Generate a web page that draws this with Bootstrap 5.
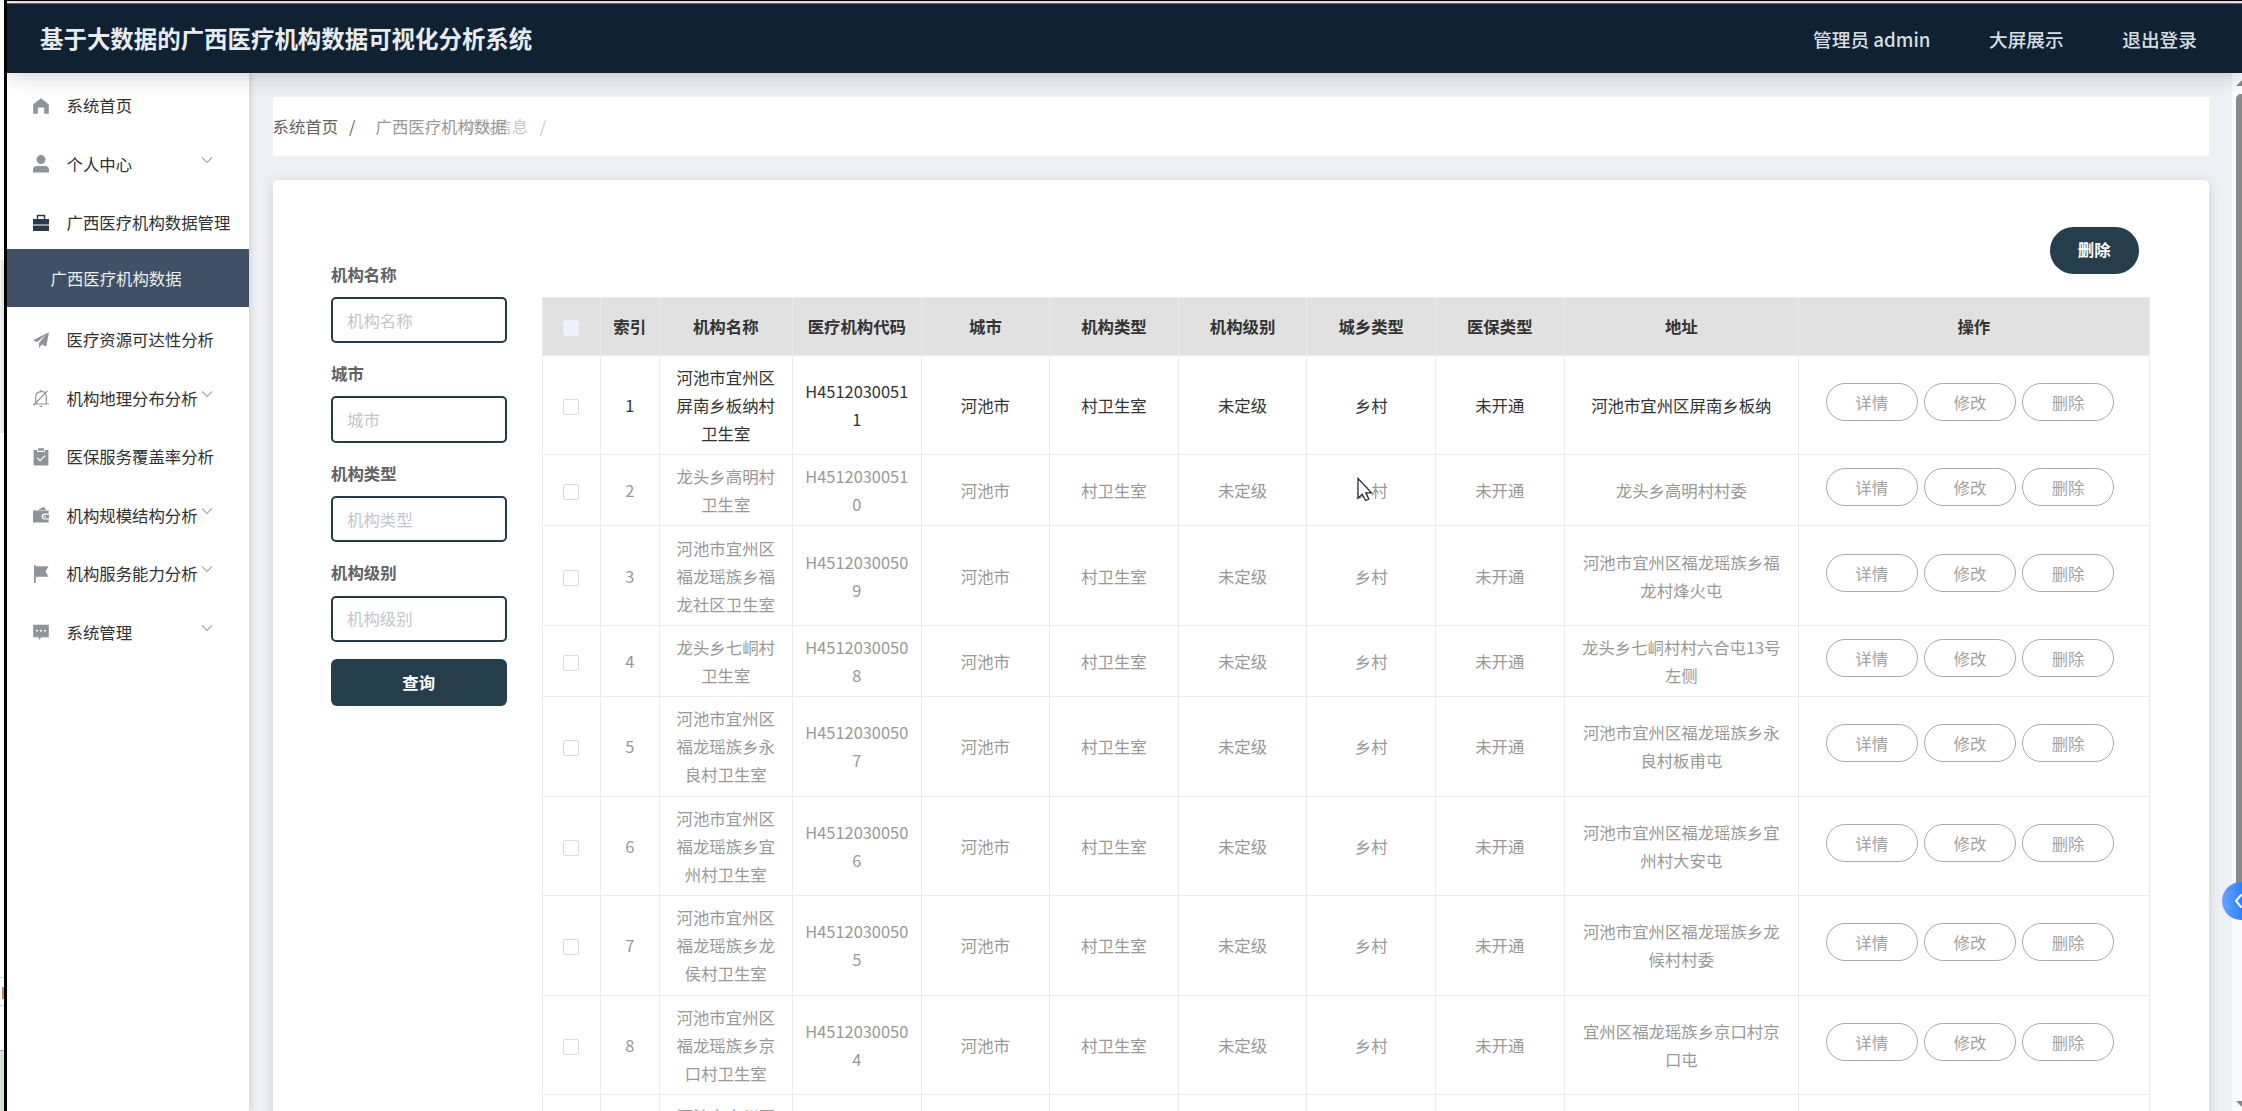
<!DOCTYPE html>
<html lang="zh-CN">

<head>
  <meta charset="UTF-8">
  <meta name="viewport" content="width=device-width, initial-scale=1.0">
  <title>基于大数据的广西医疗机构数据可视化分析系统</title>
  <link href="https://cdn.jsdelivr.net/npm/bootstrap@5.3.2/dist/css/bootstrap.min.css" rel="stylesheet">
  <script src="https://cdn.jsdelivr.net/npm/bootstrap@5.3.2/dist/js/bootstrap.bundle.min.js"></script>
  <style>
    body {
      font-family: "Noto Sans CJK SC", "Noto Sans", sans-serif;
      font-size: 16.4px;
      line-height: 28px;
      color: #303133;
      height: 100vh;
      overflow: hidden;
      background: #fff;
    }

    /* 左侧露出的窗口边缘 */
    .win-edge { width: 7px; border-right: 3px solid #000; padding-top: 260px; }
    .edge-shade { height: 173px; background: linear-gradient(90deg, #f4f4f6, #dfe0e4); }
    .edge-gap { height: 544px; }
    .edge-line { height: 29px; border-top: 1px solid #d4d4d8; border-bottom: 1px solid #d4d4d8; padding: 9px 0 0 2px; }
    .edge-mark { width: 2px; height: 12px; background: #c08a66; }
    .edge-rest { height: 45px; border-bottom: 1px solid #a9aeac; }
    .edge-green { height: 60px; background: #d5e3d5; }

    .win-top { height: 4px; background: #f1eef6; border-top: 1px solid #000; border-bottom: 1px solid #6c6580; }

    .topbar {
      height: 69px;
      background: #0f2133;
      padding: 0 45px 0 33px;
      color: #e6ebef;
      box-shadow: 0 2px 20px rgba(0, 0, 0, .2);
      z-index: 3;
    }
    .topbar .title { font-size: 23.45px; font-weight: 700; padding-bottom: 1px; }
    .topbar .links { gap: 58.5px; font-size: 18.7px; font-weight: 500; padding-top: 1px; color: #d7dee2; }

    .side { width: 242px; background: #fff; box-shadow: 1px 0 7px rgba(0, 0, 0, .16); z-index: 2; }
    .side-item { height: 58.5px; padding: 6px 0 0 26px; white-space: nowrap; }
    .side-item svg { width: 16px; height: 18px; fill: #909399; flex: none; margin: 1px 17.5px 0 0; }
    .side-item svg.chev { width: 12px; height: 8px; fill: none; stroke: #a6a9ae; stroke-width: 1.1; margin: -8px 36.5px 0 auto; }
    .side-sub { height: 58.5px; padding: 1px 0 0 43.5px; background: #405165; color: #e9edf1; }

    .main-area { background: #eef0f5; padding: 23.5px 23px 0 23.5px; overflow: hidden; }
    .crumbs { height: 59.5px; background: #fff; color: #606266; }
    .crumbs .ghost { position: absolute; left: 87px; top: 0; opacity: .55; white-space: nowrap; }
    .panel { margin-top: 23.5px; height: 1000px; background: #fff; border-radius: 5px; box-shadow: 0 2px 14px rgba(0, 0, 0, .12); padding: 47px 59px 0 58.5px; }

    .btn-dark-teal, .btn-dark-teal:hover { background: #263e4b; color: #fff; font-weight: 700; font-size: 16.4px; border: 0; height: 47px; padding: 0 0 1px; }
    .btn-remove { width: 89.5px; border-radius: 23.5px; margin-right: 11px; }

    .filters { width: 175.5px; margin-right: 35px; margin-top: -37.5px; }
    .filters label { font-weight: 700; color: #606266; display: block; height: 37.3px; }
    .filters .form-control {
      height: 46.5px;
      border: 2px solid #263a49;
      border-radius: 5px;
      font-size: 16.4px;
      padding: 0 14px 1px;
      margin-bottom: 15.8px;
    }
    .filters .form-control::placeholder { color: #c3c6cd; }
    .filters .btn { margin-top: 1.5px; }

    .grid { width: 1608px; table-layout: fixed; border-collapse: collapse; text-align: center; flex: none; }
    .grid th, .grid td { border: 1px solid #ebebeb; padding: 0 11.7px; vertical-align: middle; word-break: break-all; }
    .grid th { background: #e1e1e1; height: 57.8px; padding: 0; color: #333; }
    .grid td { color: #999; height: 71.2px; }
    .grid tr.tall td { height: 99.5px; }
    .grid tr.hot td { color: #333; }
    .tick { display: block; width: 16px; height: 16px; margin: 4px auto 0; border: 1px solid #d9dbdf; border-radius: 2px; background: #fff; }
    th .tick { background: #edf0ff; border-color: #edf0ff; margin-top: 3px; }
    .grid td .d-flex { gap: 6.2px; margin-top: -6px; padding-left: 15px; }
    .btn-pill { width: 92px; height: 38px; border: 1px solid #aaa; border-radius: 19px; color: #a3a3a3; font-size: 16.4px; padding: 0; line-height: 36px; }

    .scroller { width: 10px; background: #fafafc; padding: 7px 0 4px 4px; overflow: hidden; }
    .scroller .thumb { height: 812px; width: 10px; margin-top: 8px; background: #8a8a8a; border-radius: 5px 0 0 0; }
    .arrow { width: 12px; height: 6px; }
    .arrow-up { background: #858585; clip-path: polygon(50% 0, 100% 100%, 0 100%); }
    .arrow-down { background: #858585; clip-path: polygon(0 0, 100% 0, 50% 100%); }
    .drawer-tab { position: absolute; right: 0; top: 882px; width: 20px; height: 38px; border-radius: 19px 0 0 19px; background: linear-gradient(90deg, #6aa5fd, #3080fb); z-index: 4; }
    .cursor { position: absolute; left: 1357px; top: 477px; width: 17px; height: 25px; z-index: 4; }
  </style>
</head>

<body>
  <div class="d-flex h-100 position-relative">
    <div class="win-edge flex-shrink-0">
      <div class="edge-shade"></div>
      <div class="edge-gap"></div>
      <div class="edge-line"><div class="edge-mark"></div></div>
      <div class="edge-rest"></div>
      <div class="edge-green"></div>
    </div>

    <div class="d-flex flex-column flex-grow-1 overflow-hidden">
      <div class="win-top flex-shrink-0"></div>
      <header class="topbar d-flex align-items-center justify-content-between flex-shrink-0 position-relative">
        <div class="title">基于大数据的广西医疗机构数据可视化分析系统</div>
        <div class="links d-flex">
          <span>管理员 admin</span>
          <span>大屏展示</span>
          <span>退出登录</span>
        </div>
      </header>

      <div class="d-flex flex-grow-1 overflow-hidden">
        <nav class="side flex-shrink-0 position-relative">
          <div class="side-item d-flex align-items-center">
            <svg viewBox="0 0 16 18"><path d="M8 1.2 15.3 7q.5.4.5 1v8.7h-4.6v-5.2q0-1-1-1H5.8q-1 0-1 1v5.2H.2V8q0-.6.5-1z" /></svg>
            <span>系统首页</span>
          </div>
          <div class="side-item d-flex align-items-center">
            <svg viewBox="0 0 16 18"><circle cx="8" cy="4.6" r="4.5" /><path d="M0 17.5v-2.6q0-4 4-4h8q4 0 4 4v2.6z" /></svg>
            <span>个人中心</span>
            <svg class="chev" viewBox="0 0 12 8"><path d="m1 1.5 5 5 5-5" /></svg>
          </div>
          <div class="side-item d-flex align-items-center">
            <svg viewBox="0 0 16 18" style="fill:#263a4c"><path d="M3.8 5V.8h8.4V5H16v5.4H0V5zM5.2 5h5.6V2.3H5.2zM0 11.6h16V17H0z" fill-rule="evenodd" /></svg>
            <span>广西医疗机构数据管理</span>
          </div>
          <div class="side-sub d-flex align-items-center">广西医疗机构数据</div>
          <div class="side-item d-flex align-items-center">
            <svg viewBox="0 0 16 18"><path d="M16 1.2 0 9.2l4.2 1.9L12.6 4 6 12v5l2.9-3.4 4.4 2z" /></svg>
            <span>医疗资源可达性分析</span>
          </div>
          <div class="side-item d-flex align-items-center">
            <svg viewBox="0 0 16 18" style="fill:none;stroke:#909399;stroke-width:1.2"><path d="M2.7 14V7.5Q3 3 8 2.6T13.3 7.5V15M8 2.6V.8M.3 15H16M.5 16.5 14.5 1.6M6.6 17.3h2.8" /></svg>
            <span>机构地理分布分析</span>
            <svg class="chev" viewBox="0 0 12 8"><path d="m1 1.5 5 5 5-5" /></svg>
          </div>
          <div class="side-item d-flex align-items-center">
            <svg viewBox="0 0 16 18"><path d="M.6 2h3.6v2h7.6V2h3.6v15.6H.6zM5 .2h6v2.6H5z" /><path d="m4.2 9.8 2.9 2.9 5-5" fill="none" stroke="#fff" stroke-width="1.2" /></svg>
            <span>医保服务覆盖率分析</span>
          </div>
          <div class="side-item d-flex align-items-center">
            <svg viewBox="0 0 16 18"><path d="M5 4 10.800.8 13.200 4z" /><path fill-rule="evenodd" d="M0 4.600h15.600v3h-4q-3 .3-3 3t3 2.900h4v3.100H0z" /><path d="M11.800 8.800H16v3.600h-4.200q-1.800-.2-1.800-1.800t1.800-1.800z" /><circle cx="12" cy="10.600" r=".8" fill="#fff" /></svg>
            <span>机构规模结构分析</span>
            <svg class="chev" viewBox="0 0 12 8"><path d="m1 1.5 5 5 5-5" /></svg>
          </div>
          <div class="side-item d-flex align-items-center">
            <svg viewBox="0 0 16 18"><path d="M1 .3h1.800V1.200H15.500L12.500 6.400l3 5.300H2.800V18H1z" /></svg>
            <span>机构服务能力分析</span>
            <svg class="chev" viewBox="0 0 12 8"><path d="m1 1.5 5 5 5-5" /></svg>
          </div>
          <div class="side-item d-flex align-items-center">
            <svg viewBox="0 0 16 18"><path d="M.2 1.800h15.600v12.400H8.600L5.500 17v-2.800H.2z" /><g fill="#fff"><circle cx="4" cy="7.800" r="1" /><circle cx="8" cy="7.800" r="1" /><circle cx="12" cy="7.800" r="1" /></g></svg>
            <span>系统管理</span>
            <svg class="chev" viewBox="0 0 12 8"><path d="m1 1.5 5 5 5-5" /></svg>
          </div>
        </nav>

        <main class="main-area flex-grow-1">
          <div class="crumbs d-flex align-items-center">
            <span>系统首页</span>
            <span style="margin:0 20px 0 11px">/</span>
            <span class="position-relative" style="color:#999">广西医疗机构数据
              <span class="ghost">个人信息 <span class="ms-2">/</span></span>
            </span>
          </div>

          <div class="panel">
            <div class="d-flex justify-content-end">
              <button class="btn btn-dark-teal btn-remove">删除</button>
            </div>
            <div class="d-flex align-items-start" style="margin-top:23.5px">
              <form class="filters flex-shrink-0">
                <label for="f1">机构名称</label>
                <input class="form-control" id="f1" placeholder="机构名称">
                <label for="f2">城市</label>
                <input class="form-control" id="f2" placeholder="城市">
                <label for="f3">机构类型</label>
                <input class="form-control" id="f3" placeholder="机构类型">
                <label for="f4">机构级别</label>
                <input class="form-control" id="f4" placeholder="机构级别">
                <button type="button" class="btn btn-dark-teal w-100">查询</button>
              </form>
              <table class="grid">
                <colgroup>
                  <col style="width:58.5px"><col style="width:58.5px"><col style="width:133.5px">
                  <col style="width:128.6px"><col style="width:128.6px"><col style="width:128.6px">
                  <col style="width:128.6px"><col style="width:128.6px"><col style="width:128.6px">
                  <col style="width:234.5px"><col>
                </colgroup>
                <thead>
                  <tr>
                    <th><span class="tick"></span></th>
                    <th>索引</th>
                    <th>机构名称</th>
                    <th>医疗机构代码</th>
                    <th>城市</th>
                    <th>机构类型</th>
                    <th>机构级别</th>
                    <th>城乡类型</th>
                    <th>医保类型</th>
                    <th>地址</th>
                    <th>操作</th>
                  </tr>
                </thead>
                <tbody id="rows"></tbody>
              </table>
            </div>
          </div>
        </main>

        <div class="scroller flex-shrink-0 d-flex flex-column">
          <div class="arrow arrow-up flex-shrink-0"></div>
          <div class="thumb flex-shrink-0"></div>
          <div class="arrow arrow-down flex-shrink-0 mt-auto"></div>
        </div>
      </div>
    </div>

    <div class="drawer-tab d-flex align-items-center justify-content-end">
      <svg width="8" height="16" viewBox="0 0 8 16" fill="none" stroke="#fff" stroke-width="2"><path d="M7.500 1.500 2 8l5.500 6.500" /></svg>
    </div>
    <svg class="cursor" viewBox="0 0 17 25"><path d="M1 1.500V21l4.300-3.800 3.200 6.300 3.300-1.500-3-6.200h5.700z" fill="#fff" stroke="#2b2b33" stroke-width="1.300" /></svg>
  </div>

  <script>
    // 名称、代码、地址
    const list = [
      ['河池市宜州区屏南乡板纳村卫生室', 'H45120300511', '河池市宜州区屏南乡板纳'],
      ['龙头乡高明村卫生室', 'H45120300510', '龙头乡高明村村委'],
      ['河池市宜州区福龙瑶族乡福龙社区卫生室', 'H45120300509', '河池市宜州区福龙瑶族乡福龙村烽火屯'],
      ['龙头乡七峒村卫生室', 'H45120300508', '龙头乡七峒村村六合屯13号左侧'],
      ['河池市宜州区福龙瑶族乡永良村卫生室', 'H45120300507', '河池市宜州区福龙瑶族乡永良村板甫屯'],
      ['河池市宜州区福龙瑶族乡宜州村卫生室', 'H45120300506', '河池市宜州区福龙瑶族乡宜州村大安屯'],
      ['河池市宜州区福龙瑶族乡龙侯村卫生室', 'H45120300505', '河池市宜州区福龙瑶族乡龙候村村委'],
      ['河池市宜州区福龙瑶族乡京口村卫生室', 'H45120300504', '宜州区福龙瑶族乡京口村京口屯'],
      ['河池市宜州区福龙瑶族乡卫生室', 'H45120300503', '河池市宜州区福龙瑶族乡']
    ];
    document.getElementById('rows').innerHTML = list.map(function (r, i) {
      const cls = (r[0].length > 12 ? 'tall ' : '') + (i === 0 ? 'hot' : '');
      return `<tr class="${cls}">
        <td><span class="tick"></span></td><td>${i + 1}</td><td>${r[0]}</td><td>${r[1]}</td>
        <td>河池市</td><td>村卫生室</td><td>未定级</td><td>乡村</td><td>未开通</td><td>${r[2]}</td>
        <td><div class="d-flex"><button class="btn btn-pill">详情</button><button class="btn btn-pill">修改</button><button class="btn btn-pill">删除</button></div></td>
      </tr>`;
    }).join('');
  </script>
</body>

</html>
